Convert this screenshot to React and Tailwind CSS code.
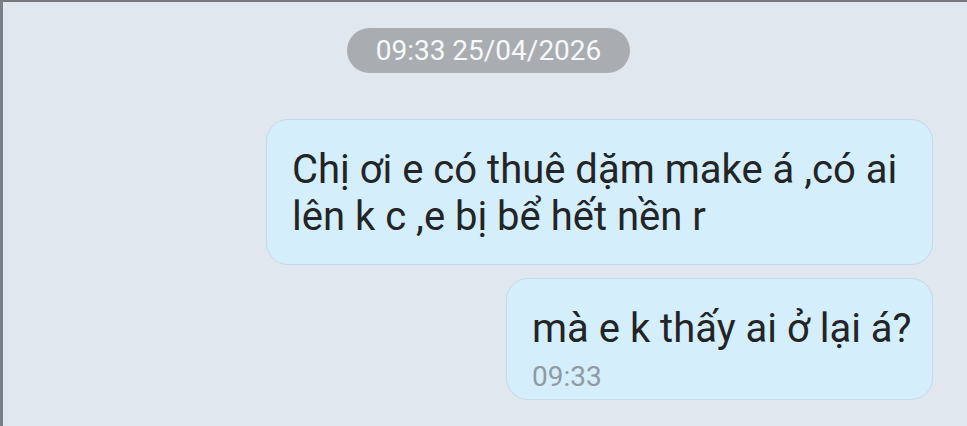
export default function App() {
  return (
    <div
      className="w-[967px] h-[426px] flex overflow-hidden bg-[#e1e7ef]"
      style={{ fontFamily: 'Roboto, "Noto Sans", sans-serif' }}
    >
      <div className="w-[3px] h-full bg-[#7c7f83] shrink-0" />
      <div className="flex-1 flex flex-col border-t-[2px] border-[#74787d]">
        <div className="mt-[26px] ml-[344px] w-[283px] h-[45px] rounded-full bg-[#a9adb2] flex items-center justify-center">
          <span className="text-[#f7f8f9] text-[28px] leading-none">09:33 25/04/2026</span>
        </div>
        <div className="mt-[46px] mr-[34px] self-end w-[667px] h-[146px] rounded-[22px] bg-[#d5eefb] border border-[#c3dae8] pl-[25px] pt-[26px]">
          <div className="text-[40px] leading-[47px] text-[#222426]">
            <span className="block whitespace-nowrap">Chị ơi e có thuê dặm make á ,có ai</span>
            <span className="block whitespace-nowrap">lên k c ,e bị bể hết nền r</span>
          </div>
        </div>
        <div className="mt-[13px] mr-[34px] self-end w-[427px] h-[122px] rounded-[22px] bg-[#d5eefb] border border-[#c3dae8] pl-[25px] pt-[26px]">
          <div className="text-[40px] leading-[47px] text-[#222426] whitespace-nowrap">mà e k thấy ai ở lại á?</div>
          <div className="mt-[11px] text-[28px] leading-[28px] text-[#8f9aa3]">09:33</div>
        </div>
      </div>
    </div>
  );
}
